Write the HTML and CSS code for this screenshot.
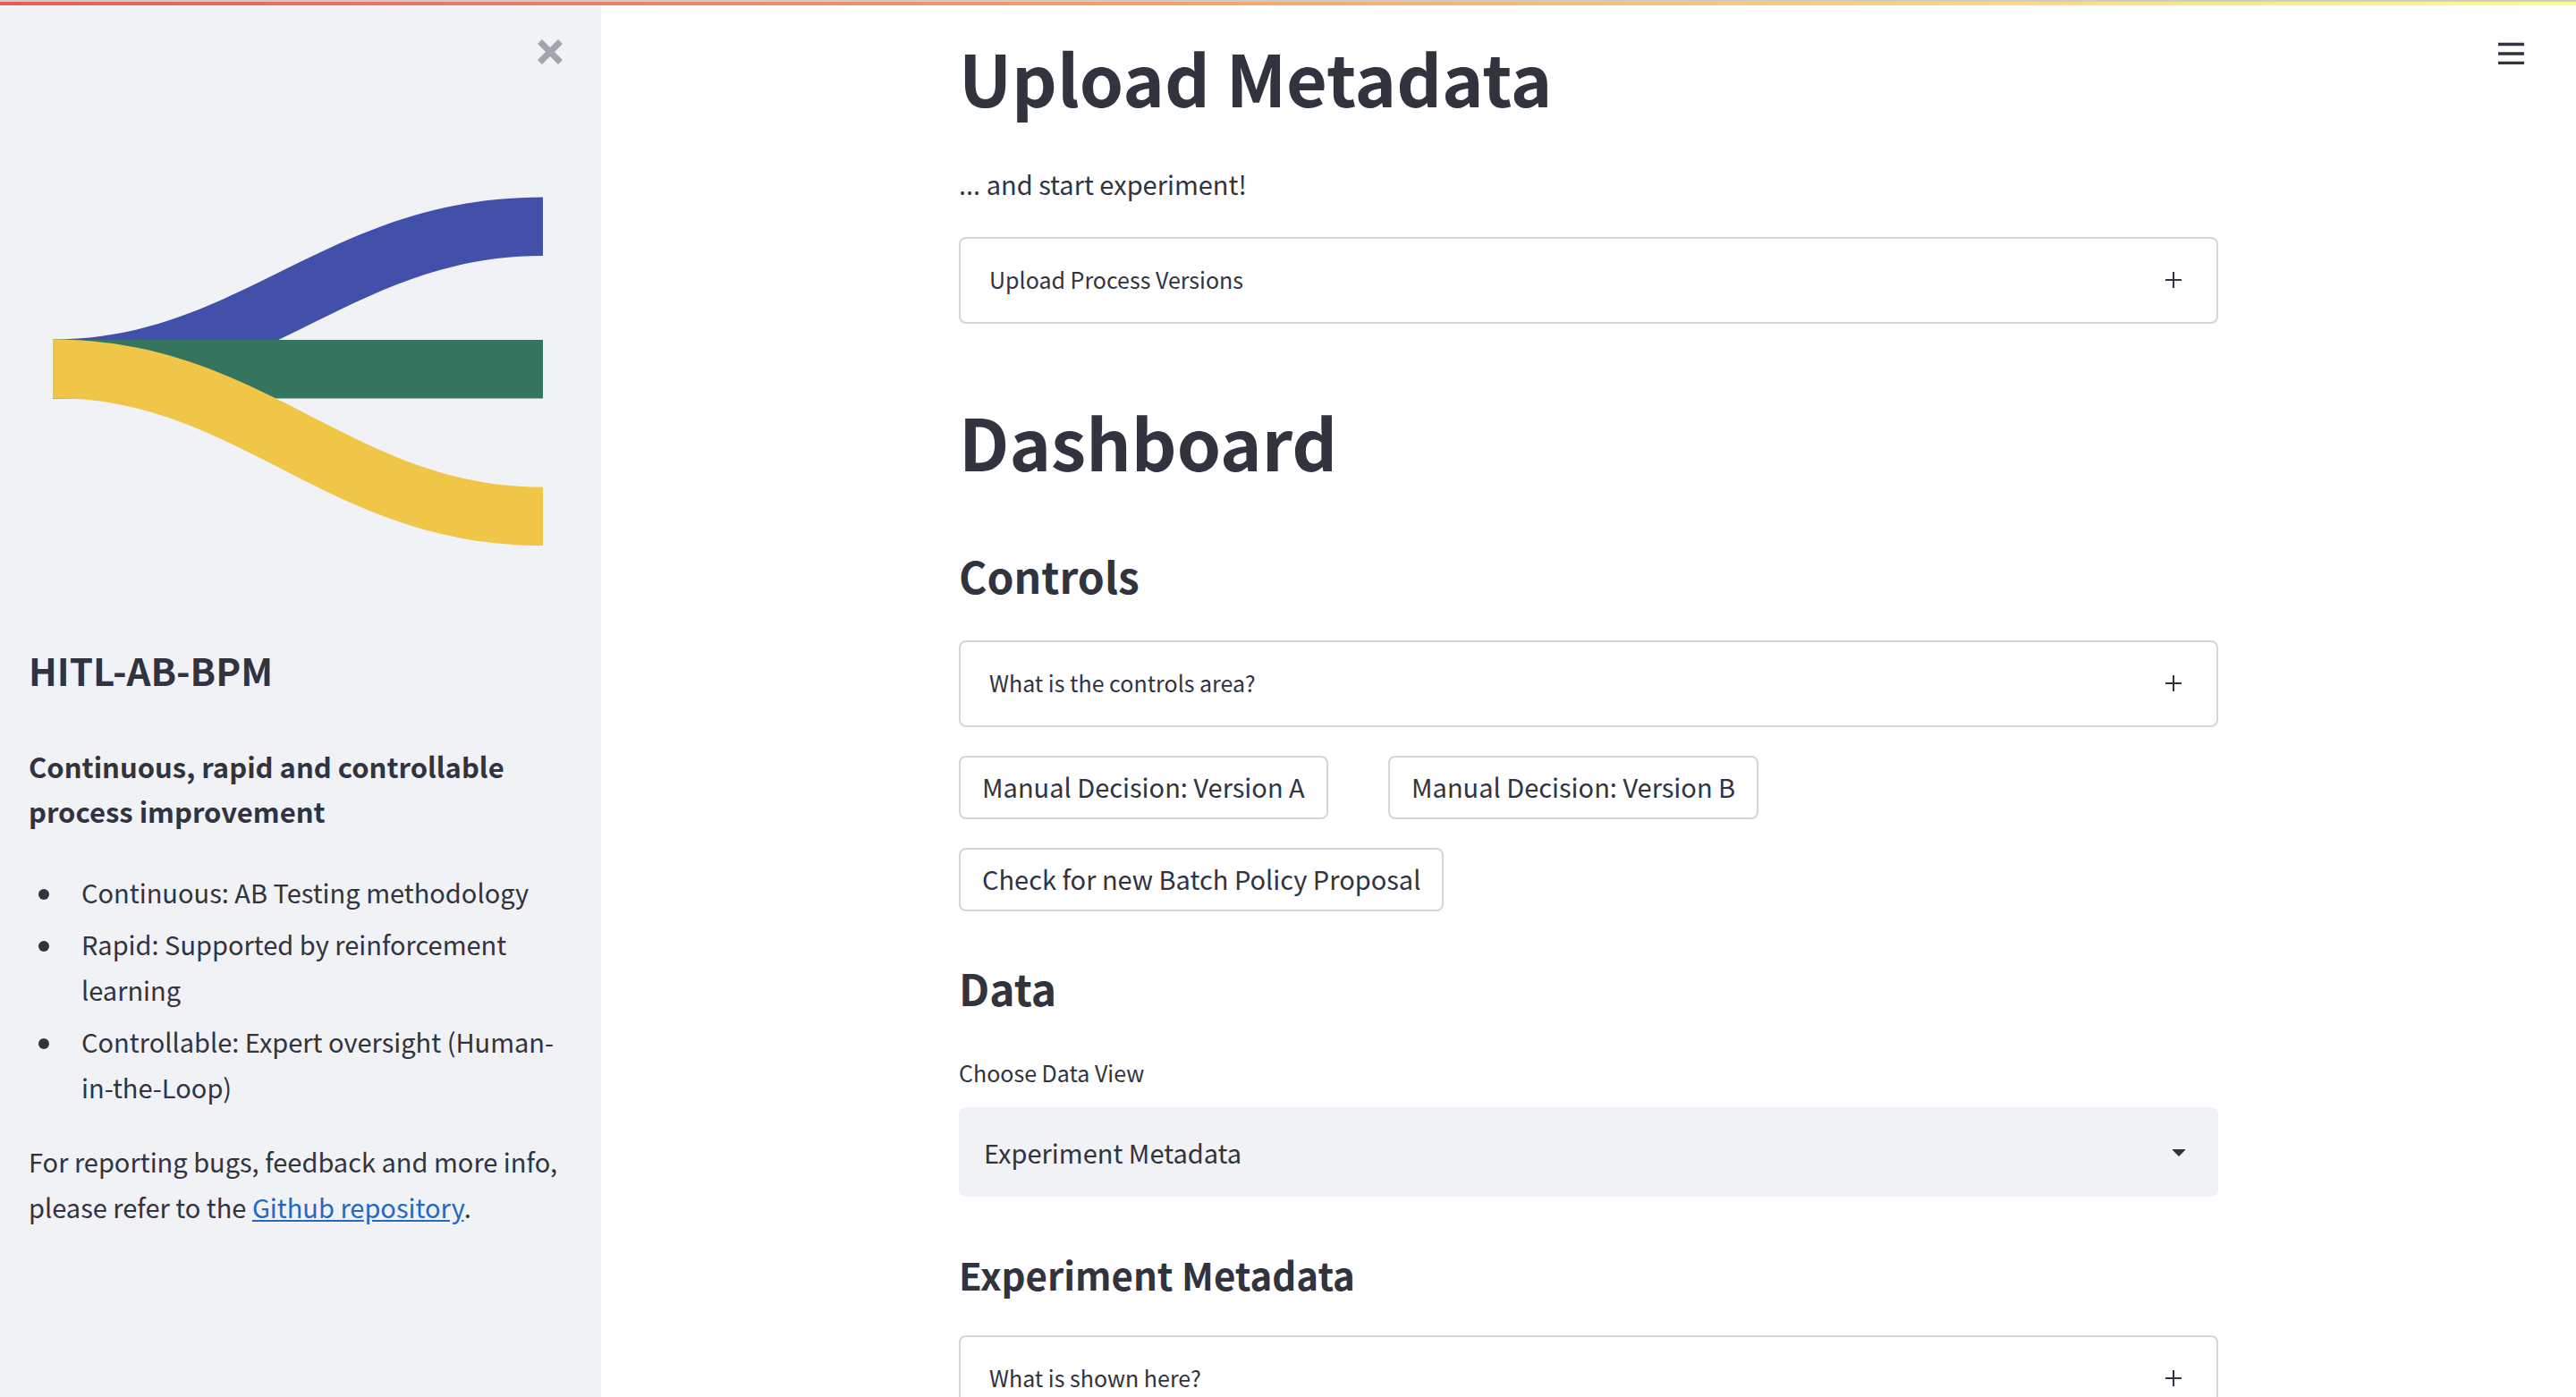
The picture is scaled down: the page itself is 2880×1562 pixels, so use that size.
FILE: index.html
```html
<!DOCTYPE html>
<html lang="en">
<head>
<meta charset="utf-8">
<meta name="viewport" content="width=device-width, initial-scale=1">
<title>HITL-AB-BPM</title>
<link rel="stylesheet" href="styles.css">
</head>
<body>
<div class="decoration"></div>
<div class="app">
  <aside class="sidebar">
    <div class="sidebar-top">
      <button class="icon-button" type="button" aria-label="Close sidebar">
        <svg class="close-icon" viewBox="0 0 30 28" aria-hidden="true"><path d="M3.500 2.500 26.500 25.500M26.500 2.500 3.500 25.500" fill="none" stroke="#a3a4ac" stroke-width="7"/></svg>
      </button>
    </div>
    <svg class="logo" viewBox="32 160 608 560" role="img" aria-label="HITL-AB-BPM logo">
      <path fill="#4250aa" d="M59 379.500C269 379.500 365 220.500 607 220.500V286C390 286 297 445 59 445Z"/>
      <path fill="#357560" d="M59 380H607V445.500H59Z"/>
      <path fill="#f0c648" d="M59 379.500C297 379.500 390 544.500 607 544.500V610C365 610 269 445 59 445Z"/>
    </svg>
    <h2 class="side-title">HITL-AB-BPM</h2>
    <p class="side-lead">Continuous, rapid and controllable process improvement</p>
    <ul class="side-list">
      <li>Continuous: AB Testing methodology</li>
      <li>Rapid: Supported by reinforcement learning</li>
      <li>Controllable: Expert oversight (Human-in-the-Loop)</li>
    </ul>
    <p class="side-note">For reporting bugs, feedback and more info, please refer to the <a href="#repository">Github repository</a>.</p>
  </aside>
  <main class="main">
    <div class="content">
      <h1>Upload Metadata</h1>
      <p class="intro">... and start experiment!</p>
      <details class="expander">
        <summary>Upload Process Versions<svg class="plus" viewBox="0 0 20 20" aria-hidden="true"><path d="M10 1V19M1 10H19"/></svg></summary>
      </details>
      <h1 class="dashboard">Dashboard</h1>
      <h2>Controls</h2>
      <details class="expander">
        <summary>What is the controls area?<svg class="plus" viewBox="0 0 20 20" aria-hidden="true"><path d="M10 1V19M1 10H19"/></svg></summary>
      </details>
      <div class="columns">
        <div><button class="button" type="button">Manual Decision: Version A</button></div>
        <div><button class="button" type="button">Manual Decision: Version B</button></div>
      </div>
      <div class="row"><button class="button" type="button">Check for new Batch Policy Proposal</button></div>
      <h2 class="data-title">Data</h2>
      <label class="field-label" for="view">Choose Data View</label>
      <div class="select">
        <select id="view"><option>Experiment Metadata</option></select>
        <svg class="arrow" viewBox="0 0 14 8" aria-hidden="true"><path d="M0 0H14V1L7 8 0 1Z" fill="#31333f"/></svg>
      </div>
      <h3>Experiment Metadata</h3>
      <details class="expander">
        <summary>What is shown here?<svg class="plus" viewBox="0 0 20 20" aria-hidden="true"><path d="M10 1V19M1 10H19"/></svg></summary>
      </details>
    </div>
  </main>
</div>
<button class="icon-button menu" type="button" aria-label="Main menu">
  <svg class="menu-icon" viewBox="0 0 29 25" aria-hidden="true"><path d="M0 2.500H29M0 13H29M0 23.500H29" stroke="#31333f" stroke-width="3.500"/></svg>
</button>
</body>
</html>
```

FILE: styles.css
```css
* {
  box-sizing: border-box;
}

body {
  margin: 0;
  height: 100vh;
  display: flex;
  flex-direction: column;
  background: #fff;
  color: #31333f;
  font-family: "Noto Sans CJK SC", "Noto Sans", sans-serif;
  font-size: 29px;
  line-height: 51px;
}

h1, h2, h3, p, ul {
  margin: 0;
}

button, select {
  font: inherit;
  color: inherit;
}

.decoration {
  flex: none;
  height: 6px;
  border-top: 2px solid #ccc;
  background: linear-gradient(90deg, #ea5a56, #fffd8a);
}

.app {
  flex: 1;
  min-height: 0;
  display: flex;
}

.sidebar {
  flex: 0 0 672px;
  padding: 28px 32px;
  background: #f0f2f6;
  overflow-y: auto;
  scrollbar-width: none;
}

.sidebar-top {
  display: flex;
  justify-content: flex-end;
}

.icon-button {
  display: flex;
  padding: 10px;
  border: 0;
  background: none;
}

.close-icon {
  width: 30px;
  height: 28px;
}

.logo {
  display: block;
  width: 100%;
  margin-top: 78px;
}

.side-title {
  font-size: 42px;
  line-height: 58px;
}

.side-lead {
  margin-top: 54px;
  font-size: 31px;
  line-height: 50px;
  font-weight: 700;
}

.side-list {
  margin: 40px 0 32px;
  padding-left: 11px;
  list-style: none;
}

.side-list li {
  display: flex;
  gap: 36px;
}

.side-list li::before {
  content: "";
  flex: none;
  width: 12px;
  height: 12px;
  margin-top: 22px;
  border-radius: 50%;
  background: #31333f;
}

.side-list li + li {
  margin-top: 7px;
}

.side-note a {
  color: #2268c4;
}

.main {
  flex: 1;
  min-width: 0;
  overflow-y: auto;
  scrollbar-width: none;
}

.content {
  max-width: 1408px;
  margin: 0 auto;
  padding: 27px 0 80px;
}

h1 {
  font-size: 79px;
  line-height: 106px;
}

h2 {
  font-size: 48px;
  line-height: 68px;
}

h3 {
  margin-top: 58px;
  font-size: 42px;
  line-height: 58px;
}

.intro {
  margin-top: 41px;
}

.expander {
  margin-top: 39px;
  border: 2px solid #d6d6d8;
  border-radius: 8px;
  font-size: 25px;
}

.intro + .expander {
  margin-top: 34px;
}

.expander summary {
  display: flex;
  align-items: center;
  justify-content: space-between;
  padding: 20px 38px 22px 32px;
  list-style: none;
}

.plus {
  width: 20px;
  height: 20px;
  fill: none;
  stroke: #31333f;
  stroke-width: 2;
}

.dashboard {
  margin-top: 78px;
}

.dashboard + h2 {
  margin-top: 63px;
}

.columns {
  display: grid;
  grid-template-columns: repeat(3, 1fr);
  gap: 32px;
  margin-top: 32px;
}

.row {
  margin-top: 32px;
}

.button {
  display: block;
  padding: 7px 24px 9px;
  border: 2px solid #d6d6d8;
  border-radius: 8px;
  background: #fff;
  white-space: nowrap;
}

.data-title {
  margin-top: 51px;
}

.field-label {
  display: block;
  margin-top: 40px;
  font-size: 25px;
  line-height: 42px;
}

.select {
  position: relative;
  margin-top: 18px;
}

.select select {
  display: block;
  width: 100%;
  height: 100px;
  padding: 0 28px;
  border: 0;
  border-radius: 8px;
  background: #f0f2f6;
  appearance: none;
}

.arrow {
  position: absolute;
  top: 47px;
  right: 37px;
  width: 14px;
  height: 8px;
  pointer-events: none;
}

.menu {
  position: absolute;
  top: 37px;
  right: 48px;
}

.menu-icon {
  width: 29px;
  height: 25px;
}
```
